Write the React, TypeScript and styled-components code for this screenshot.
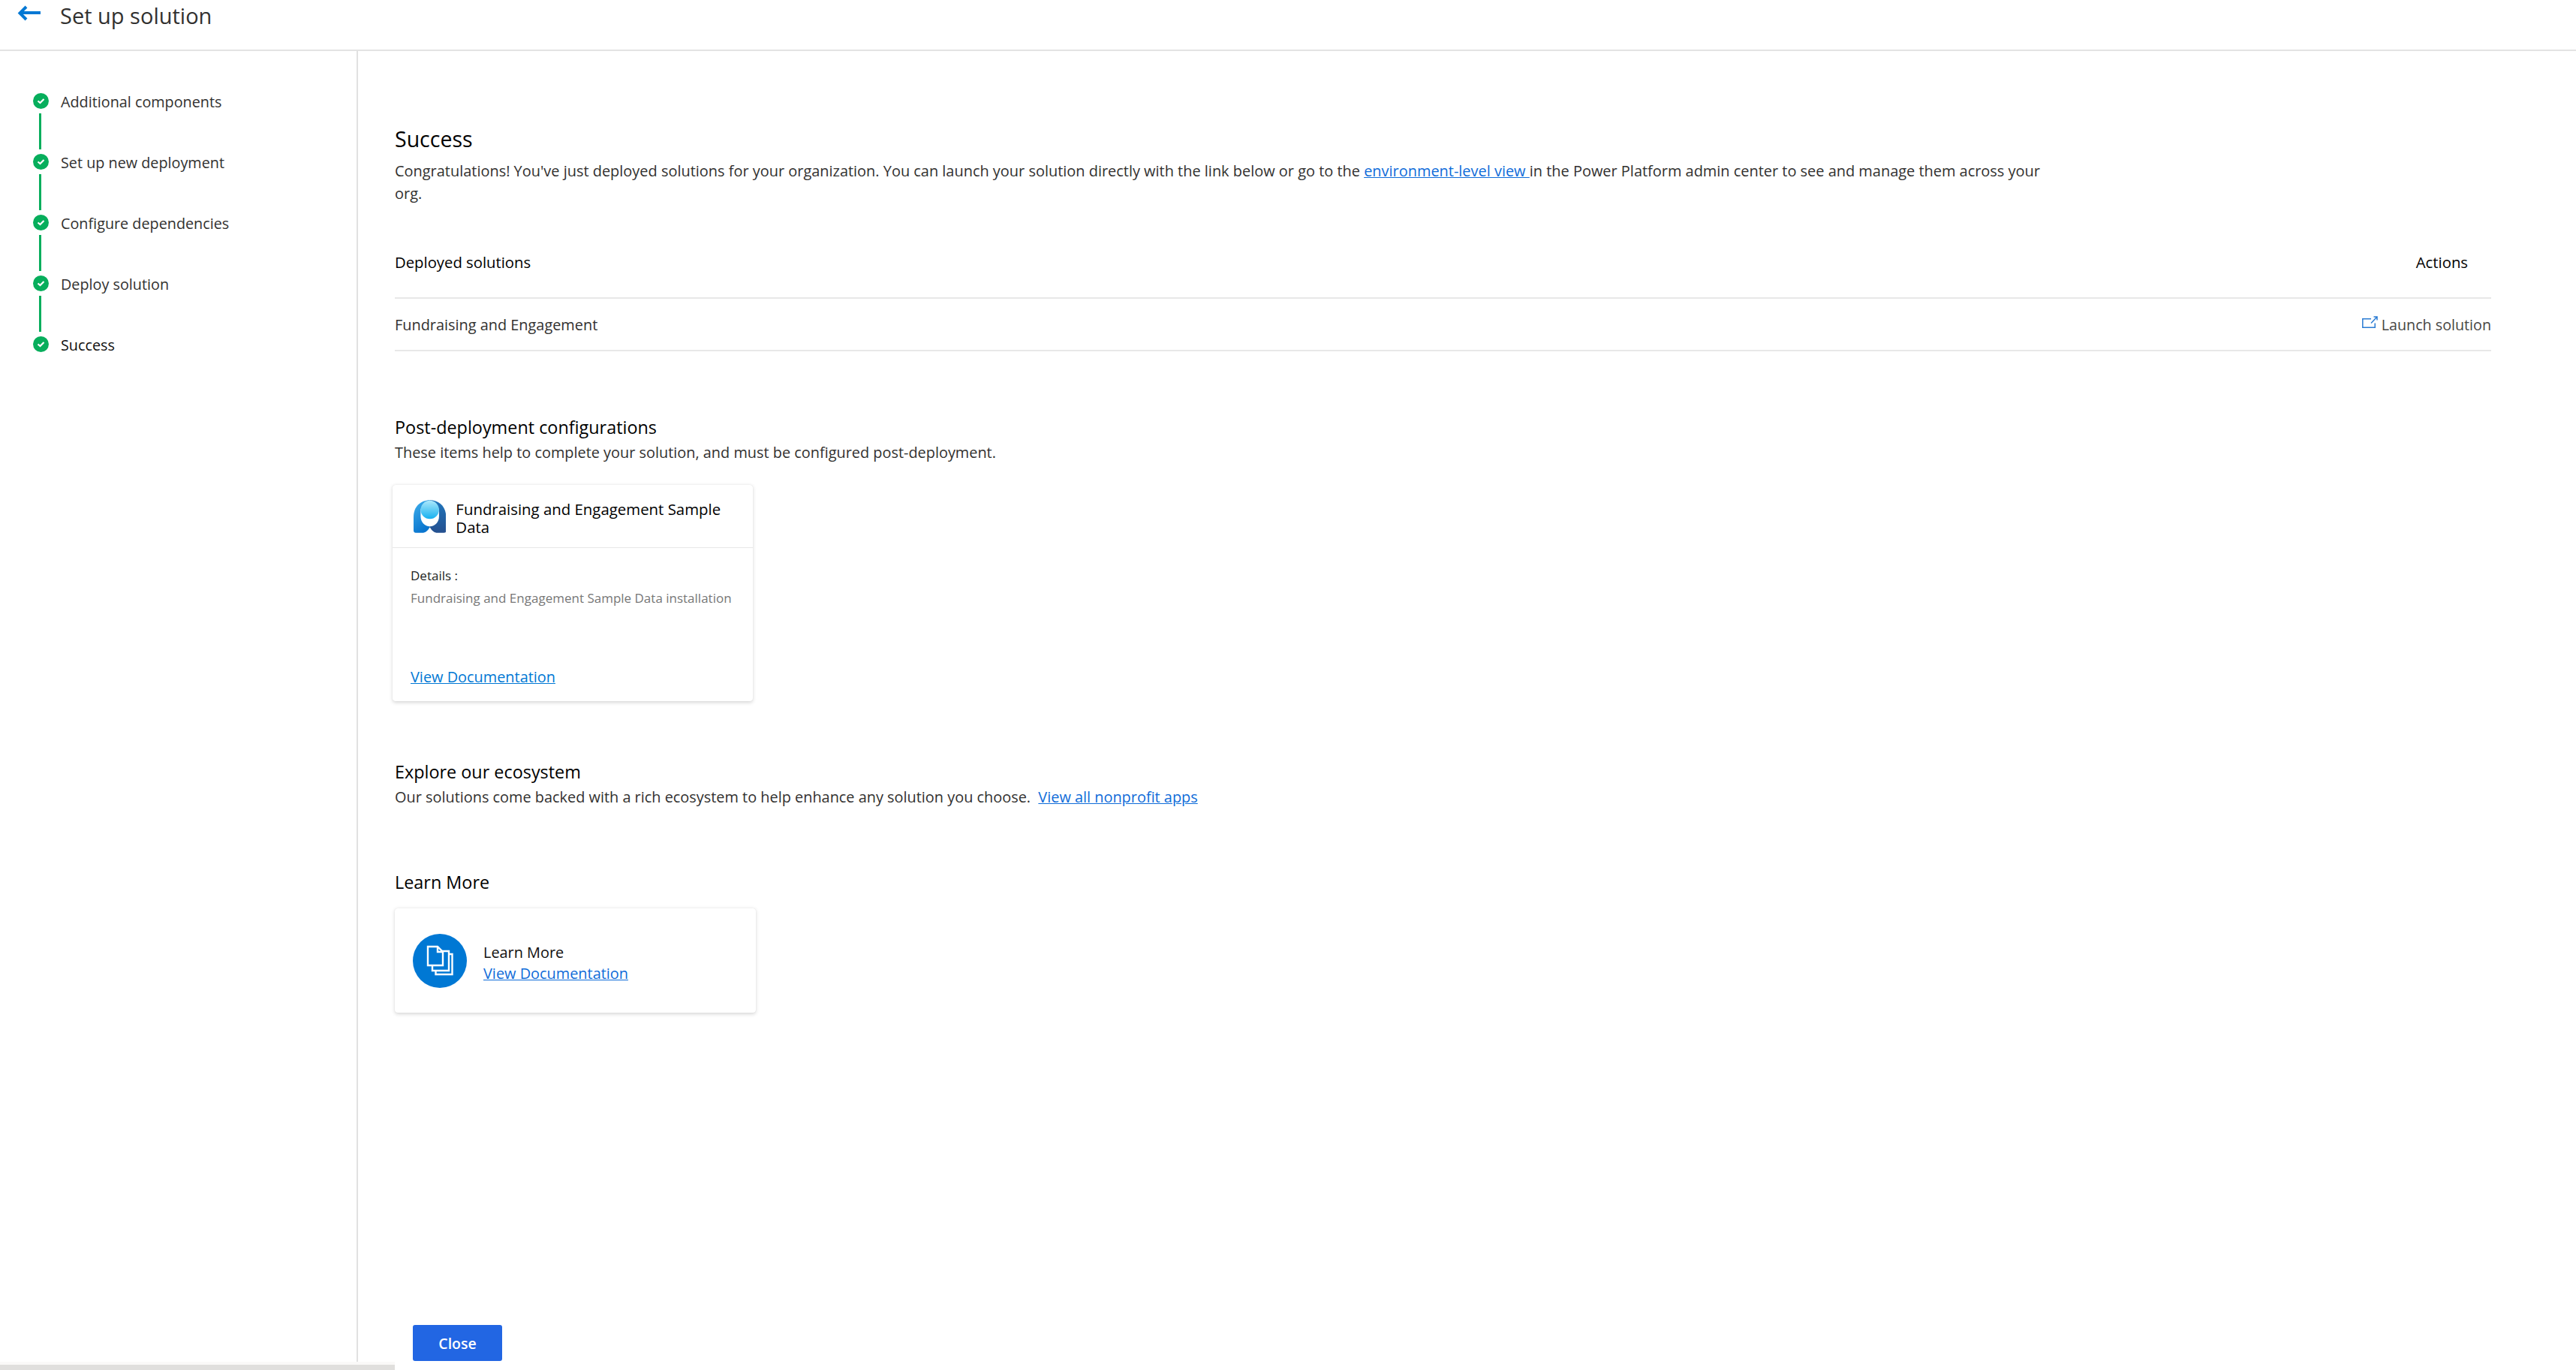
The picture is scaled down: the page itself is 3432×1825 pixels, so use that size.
import styled, { createGlobalStyle } from 'styled-components';

const GlobalStyle = createGlobalStyle`
  html, body {
    margin: 0;
    padding: 0;
    background: #fff;
  }
  body {
    font-family: "Open Sans", "Noto Sans", sans-serif;
    color: #323130;
  }
`;

const steps = ['Additional components', 'Set up new deployment', 'Configure dependencies', 'Deploy solution', 'Success'];

const BackArrow = () => (
  <svg width="32" height="22" viewBox="0 0 32 22" fill="none" stroke="#0078d4" strokeWidth="4">
    <path d="M3 10h28" />
    <path d="M12 2L3.500 10.500 12 19" />
  </svg>
);

const CheckIcon = () => (
  <svg width="21" height="21" viewBox="0 0 21 21">
    <circle cx="10.500" cy="10.500" r="10.500" fill="#07ae5c" />
    <path d="M6.500 10.500l3 2.500 5-5" fill="none" stroke="#fff" strokeWidth="2.200" />
  </svg>
);

const LaunchIcon = () => (
  <svg width="21" height="16" viewBox="0 0 21 16" fill="none" stroke="#2b7cd3" strokeWidth="1.500">
    <path d="M12 3.800H.8v11.400h16.400V9.500" />
    <path d="M12 9.500L19.500 1.500M15.500 1h4.500v4.500" />
  </svg>
);

const SolutionLogo = () => (
  <svg width="46" height="46" viewBox="0 0 46 46">
    <defs>
      <linearGradient id="logoLeft" x1="0" y1="0" x2="0.400" y2="1">
        <stop offset="0" stopColor="#3fb0ec" />
        <stop offset="1" stopColor="#0a76cf" />
      </linearGradient>
      <linearGradient id="logoRight" x1="0" y1="0" x2="0" y2="1">
        <stop offset="0" stopColor="#1f76bd" />
        <stop offset="1" stopColor="#25508f" />
      </linearGradient>
      <linearGradient id="logoBall" x1="0" y1="0" x2="0" y2="1">
        <stop offset="0" stopColor="#ace8fb" />
        <stop offset="1" stopColor="#14b0f0" />
      </linearGradient>
    </defs>
    <path d="M23 0C10 0 0 9 0 24v19c0 2 1 3 3 3h9c5 0 8-3 11-8V0z" fill="url(#logoLeft)" />
    <path d="M23 0c13 0 23 9 23 24v19c0 2-1 3-3 3h-9c-5 0-8-3-11-8V0z" fill="url(#logoRight)" />
    <path d="M10 12h26v11c0 8-6 14-13 14s-13-6-13-14z" fill="#fff" />
    <circle cx="23" cy="13.500" r="13" fill="url(#logoBall)" />
  </svg>
);

const DocsIcon = () => (
  <svg width="72" height="72" viewBox="0 0 72 72">
    <circle cx="36" cy="36" r="36" fill="#0078d4" />
    <g fill="none" stroke="#fff" strokeWidth="2.400">
      <path d="M20 17h13l7 7v18H20z" />
      <path d="M33 17v7h7" />
      <path d="M37 23h11v26H26v-7" />
      <path d="M48 27h4.500v27H30.500v-5" />
    </g>
  </svg>
);

export default function App() {
  return (
    <Page>
      <GlobalStyle />
      <Header>
        <BackButton><BackArrow /></BackButton>
        <PageTitle>Set up solution</PageTitle>
      </Header>
      <Body>
        <Sidebar>
          {steps.map((step, i) => (
            <StepGroup key={step}>
              <Step>
                <CheckIcon />
                <StepLabel $active={step === 'Success'}>{step}</StepLabel>
              </Step>
              {i < steps.length - 1 && <StepLine />}
            </StepGroup>
          ))}
        </Sidebar>
        <Main>
          <Content>
            <SuccessTitle>Success</SuccessTitle>
            <Paragraph>
              Congratulations! You've just deployed solutions for your organization. You can launch your solution directly with the link below or go to the <TextLink href="#">environment-level view </TextLink>in the Power Platform admin center to see and manage them across your org.
            </Paragraph>
            <TableHead>
              <span>Deployed solutions</span>
              <ActionsHead>Actions</ActionsHead>
            </TableHead>
            <TableRow>
              <span>Fundraising and Engagement</span>
              <LaunchAction><LaunchIcon />Launch solution</LaunchAction>
            </TableRow>

            <SectionTitle $top={85}>Post-deployment configurations</SectionTitle>
            <SectionText>These items help to complete your solution, and must be configured post-deployment.</SectionText>
            <ConfigCard>
              <ConfigHeader>
                <SolutionLogo />
                <ConfigTitle>Fundraising and Engagement Sample Data</ConfigTitle>
              </ConfigHeader>
              <ConfigBody>
                <DetailsLabel>Details :</DetailsLabel>
                <DetailsText>Fundraising and Engagement Sample Data installation</DetailsText>
                <CardLink href="#">View Documentation</CardLink>
              </ConfigBody>
            </ConfigCard>

            <SectionTitle $top={78}>Explore our ecosystem</SectionTitle>
            <SectionText>
              Our solutions come backed with a rich ecosystem to help enhance any solution you choose.&nbsp; <TextLink href="#">View all nonprofit apps</TextLink>
            </SectionText>

            <SectionTitle $top={82}>Learn More</SectionTitle>
            <LearnCard>
              <DocsIcon />
              <LearnText>
                <LearnTitle>Learn More</LearnTitle>
                <TextLink href="#">View Documentation</TextLink>
              </LearnText>
            </LearnCard>
          </Content>
          <Footer>
            <CloseButton>Close</CloseButton>
          </Footer>
        </Main>
      </Body>
      <ScrollBar>
        <ScrollThumb />
      </ScrollBar>
    </Page>
  );
}

const Page = styled.div`
  height: 1825px;
  display: flex;
  flex-direction: column;
  overflow: hidden;
`;

const Header = styled.header`
  height: 66px;
  flex: none;
  display: flex;
  align-items: flex-start;
  border-bottom: 2px solid #e3e3e3;
`;

const BackButton = styled.div`
  margin: 7px 0 0 23px;
  width: 32px;
  height: 22px;
`;

const PageTitle = styled.h1`
  margin: 0 0 0 25px;
  font-size: 29px;
  font-weight: 500;
  line-height: 41px;
  color: #323130;
`;

const Body = styled.div`
  flex: 1;
  min-height: 0;
  display: flex;
`;

const Sidebar = styled.nav`
  flex: none;
  width: 431px;
  padding: 56px 0 0 44px;
  border-right: 2px solid #e1e1e1;
`;

const StepGroup = styled.div``;

const Step = styled.div`
  height: 21px;
  display: flex;
  align-items: center;
  gap: 16px;
`;

const StepLabel = styled.span<{ $active?: boolean }>`
  font-size: 19.800px;
  line-height: 24px;
  margin-top: 3px;
  color: ${p => (p.$active ? '#11100f' : '#323130')};
  font-weight: ${p => (p.$active ? 500 : 400)};
`;

const StepLine = styled.div`
  width: 3px;
  height: 48px;
  margin: 6px 0 6px 8px;
  background: #07ae5c;
`;

const Main = styled.main`
  flex: 1;
  min-width: 0;
  display: flex;
  flex-direction: column;
`;

const Content = styled.div`
  flex: 1;
  padding: 97px 113px 0 49px;
`;

const SuccessTitle = styled.h2`
  margin: 0;
  font-size: 28.500px;
  font-weight: 500;
  line-height: 40px;
  color: #000;
`;

const Paragraph = styled.p`
  margin: 8px 0 0;
  max-width: 2214px;
  font-size: 19.950px;
  line-height: 30px;
`;

const TextLink = styled.a`
  color: #0f6cd9;
  text-decoration: underline;
`;

const TableHead = styled.div`
  margin-top: 29px;
  height: 96px;
  display: flex;
  align-items: center;
  justify-content: space-between;
  border-bottom: 2px solid #e8e8e8;
  box-sizing: border-box;
  font-size: 20.300px;
  font-weight: 500;
  color: #000;
`;

const ActionsHead = styled.span`
  margin-right: 31px;
`;

const TableRow = styled.div`
  height: 70px;
  display: flex;
  align-items: center;
  justify-content: space-between;
  border-bottom: 2px solid #e8e8e8;
  box-sizing: border-box;
  font-size: 19.900px;
`;

const LaunchAction = styled.span`
  display: flex;
  align-items: center;
  gap: 5px;
  font-size: 19.700px;
  color: #484644;

  svg {
    margin-top: -6px;
  }
`;

const SectionTitle = styled.h3<{ $top: number }>`
  margin: ${p => p.$top}px 0 0;
  font-size: 23.400px;
  font-weight: 500;
  line-height: 33px;
  color: #000;
`;

const SectionText = styled.p`
  margin: 2px 0 0;
  font-size: 19.900px;
  line-height: 30px;
`;

const ConfigCard = styled.article`
  margin: 28px 0 0 -3px;
  width: 480px;
  height: 288px;
  display: flex;
  flex-direction: column;
  background: #fff;
  border-radius: 4px;
  box-shadow: 0 1.500px 5px rgba(0, 0, 0, 0.16), 0 0 1px rgba(0, 0, 0, 0.1);
`;

const ConfigHeader = styled.div`
  height: 84px;
  flex: none;
  box-sizing: border-box;
  padding: 19px 16px 0 28px;
  display: flex;
  align-items: flex-start;
  gap: 13px;
  border-bottom: 1px solid #e8e8e8;
`;

const ConfigTitle = styled.div`
  font-size: 20.400px;
  font-weight: 500;
  line-height: 24px;
  color: #000;
  margin-top: 1px;
`;

const ConfigBody = styled.div`
  flex: 1;
  padding: 25px 24px 17px;
  display: flex;
  flex-direction: column;
`;

const DetailsLabel = styled.div`
  font-size: 17px;
  font-weight: 500;
  line-height: 24px;
  color: #201f1e;
`;

const DetailsText = styled.div`
  margin-top: 6px;
  font-size: 17px;
  line-height: 24px;
  color: #777;
`;

const CardLink = styled.a`
  margin-top: auto;
  font-size: 19.900px;
  line-height: 30px;
  color: #0078d4;
  text-decoration: underline;
`;

const LearnCard = styled.article`
  margin-top: 18px;
  width: 481px;
  height: 139px;
  box-sizing: border-box;
  padding-left: 24px;
  display: flex;
  align-items: center;
  gap: 22px;
  background: #fff;
  border-radius: 4px;
  box-shadow: 0 1.500px 5px rgba(0, 0, 0, 0.16), 0 0 1px rgba(0, 0, 0, 0.1);
`;

const LearnText = styled.div`
  margin-top: 6px;
  display: flex;
  flex-direction: column;
  font-size: 19.900px;
  line-height: 28px;
`;

const LearnTitle = styled.span`
  font-weight: 500;
  color: #11100f;
`;

const Footer = styled.footer`
  padding: 0 0 1px 73px;
`;

const CloseButton = styled.button`
  display: block;
  width: 119px;
  height: 48px;
  border: 0;
  border-radius: 3px;
  background: #2266e3;
  color: #fff;
  font-family: inherit;
  font-size: 19.500px;
  font-weight: 600;
`;

const ScrollBar = styled.div`
  height: 11px;
  flex: none;
`;

const ScrollThumb = styled.div`
  width: 526px;
  height: 11px;
  box-sizing: border-box;
  border-top: 4px solid #faf9f8;
  background: #e0dfdd;
`;
